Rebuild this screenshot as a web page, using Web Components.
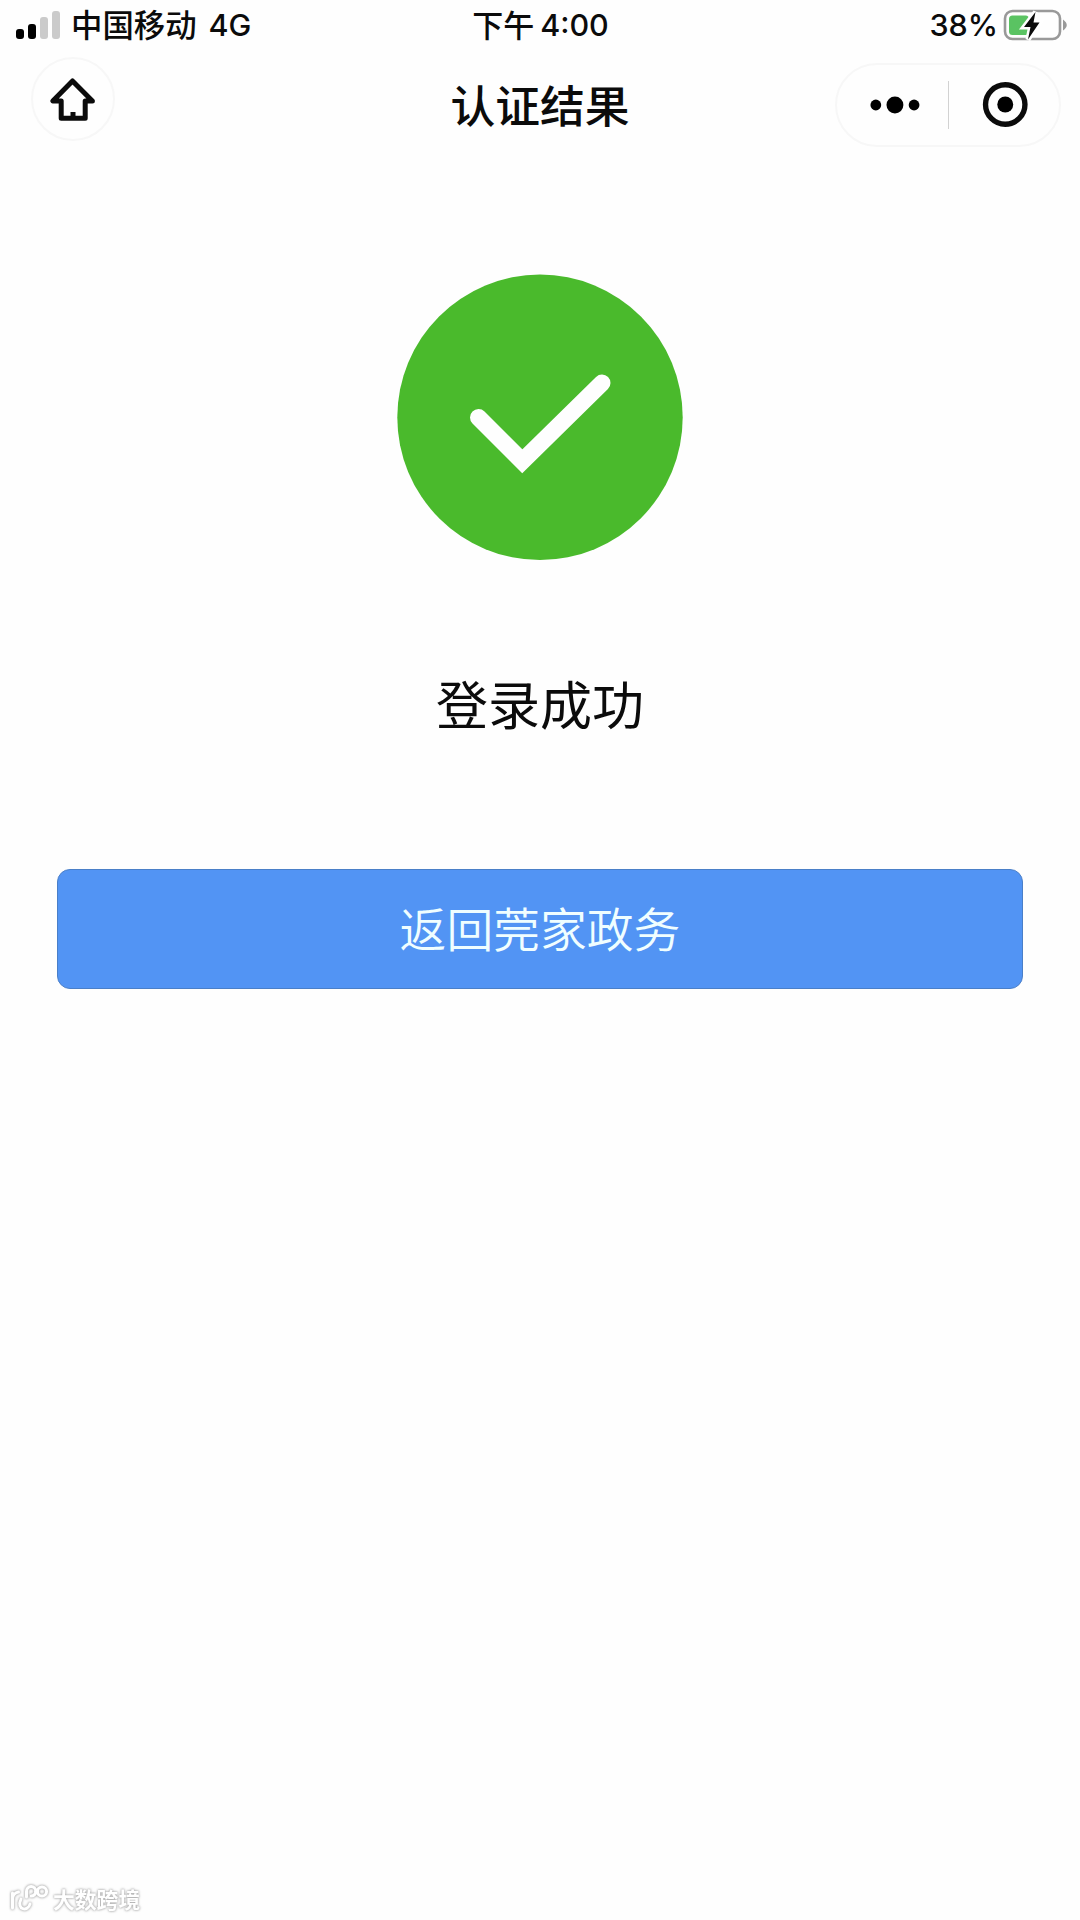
<!DOCTYPE html>
<html lang="zh-CN">
<head>
<meta charset="utf-8">
<title>认证结果</title>
<style>
  html, body {
    margin: 0;
    height: 100%;
    background: #fefefe;
  }

  body {
    font-family: Inter, "Noto Sans CJK SC", sans-serif;
    color: #0b0b0b;
    overflow: hidden;
  }
</style>
</head>
<body>
<app-screen>
  <status-bar slot="header" carrier="中国移动" network="4G" time="4:00" period="下午" battery="38%"></status-bar>
  <nav-bar slot="header">认证结果</nav-bar>
  <result-panel>
    登录成功
    <action-button slot="action">返回莞家政务</action-button>
  </result-panel>
  <brand-mark slot="footer">大数跨境</brand-mark>
</app-screen>

<script>
// Page frame: header, content, footer
class AppScreen extends HTMLElement {
  constructor() {
    super();
    this.attachShadow({ mode: 'open' });
    this.shadowRoot.innerHTML = `
      <style>
        :host {
          display: flex;
          flex-direction: column;
          width: 1080px;
          height: 1920px;
          overflow: hidden;
        }

        main {
          flex: 1;
        }
      </style>
      <slot name="header"></slot>
      <main><slot></slot></main>
      <slot name="footer"></slot>
    `;
  }
}

customElements.define('app-screen', AppScreen);

// Phone status bar
class StatusBar extends HTMLElement {
  constructor() {
    super();
    this.attachShadow({ mode: 'open' });
  }

  connectedCallback() {
    const get = (name) => this.getAttribute(name) || '';

    this.shadowRoot.innerHTML = `
      <style>
        :host {
          display: grid;
          grid-template-columns: 1fr auto 1fr;
          align-items: center;
          height: 50px;
          padding: 0 13px 0 16px;
          font-size: 30.5px;
          font-weight: 450;
          line-height: 50px;
          white-space: nowrap;
        }

        svg {
          display: block;
          flex: none;
        }

        .left,
        .center,
        .right {
          display: flex;
          align-items: center;
        }

        .cjk {
          font-family: "Noto Sans CJK SC", sans-serif;
          font-size: 31.4px;
          font-weight: 500;
          line-height: 48px;
          padding-bottom: 2px;
        }

        .left .cjk {
          margin: 0 12px 0 10px;
        }

        .center .cjk {
          font-size: 31px;
          margin-right: 6px;
        }

        .center {
          margin-right: 2px;
        }

        .right {
          justify-content: flex-end;
          gap: 5px;
        }
      </style>
      <div class="left">
        <svg width="45" height="50" viewBox="0 0 45 50">
          <rect x="0" y="29" width="8" height="10" rx="3"/>
          <rect x="12" y="24" width="8" height="15" rx="3"/>
          <rect x="24" y="17" width="8" height="22" rx="3" fill="#cbcbcb"/>
          <rect x="36" y="11" width="8" height="28" rx="3" fill="#cbcbcb"/>
        </svg>
        <span class="cjk">${get('carrier')}</span>
        <span>${get('network')}</span>
      </div>
      <div class="center">
        <span class="cjk">${get('period')}</span>
        <span>${get('time')}</span>
      </div>
      <div class="right">
        <span>${get('battery')}</span>
        <svg width="64" height="50" viewBox="0 0 64 50">
          <rect x="2" y="11" width="55" height="28" rx="7.5" fill="none" stroke="#999" stroke-width="2.6"/>
          <path d="M60 19.5 Q67.5 25 60 30.5 Z" fill="#999"/>
          <rect x="6" y="15.5" width="20" height="19.5" rx="3.5" fill="#5ac362"/>
          <path d="M32.5 12 L21 27 H27.5 L25 39.5 L36.5 22.5 H30.5 Z" fill="#0b0b0b" stroke="#fff" stroke-width="5" paint-order="stroke"/>
        </svg>
      </div>
    `;
  }
}

customElements.define('status-bar', StatusBar);

// Title bar with home button and menu capsule
class NavBar extends HTMLElement {
  constructor() {
    super();
    this.attachShadow({ mode: 'open' });
    this.shadowRoot.innerHTML = `
      <style>
        :host {
          display: grid;
          grid-template-columns: 1fr auto 1fr;
          align-items: center;
          height: 110px;
          padding: 0 19px 0 31px;
          box-sizing: border-box;
        }

        svg {
          display: block;
        }

        .home,
        .capsule {
          box-sizing: border-box;
          border: 2px solid #f7f7f7;
          display: flex;
          align-items: center;
        }

        .home {
          width: 84px;
          height: 84px;
          margin-bottom: 12px;
          border-radius: 50%;
          justify-content: center;
        }

        h1 {
          margin: 0 0 3px -12px;
          font-family: "Noto Sans CJK SC", sans-serif;
          font-size: 44.8px;
          font-weight: 500;
          line-height: 66px;
        }

        .capsule {
          justify-self: end;
          width: 226px;
          height: 84px;
          margin-bottom: 1px;
          border-radius: 42px;
        }

        .capsule svg {
          flex: 1;
        }

        .divider {
          width: 1px;
          height: 48px;
          background: #d2d2d2;
        }
      </style>
      <div class="home">
        <svg width="48" height="48" viewBox="0 0 48 48" fill="none" stroke="#0b0b0b" stroke-width="5" stroke-linejoin="round">
          <path d="M23.5 6 L3.8 26 H12.2 V43.2 H36.2 V26 H43.4 Z"/>
          <path d="M24 43 V37"/>
        </svg>
      </div>
      <h1><slot></slot></h1>
      <div class="capsule">
        <svg width="111" height="48" viewBox="0 0 111 48">
          <circle cx="39" cy="24" r="5.4"/>
          <circle cx="58.2" cy="24" r="8.5"/>
          <circle cx="77.4" cy="24" r="5.4"/>
        </svg>
        <div class="divider"></div>
        <svg width="111" height="48" viewBox="0 0 111 48">
          <circle cx="56.5" cy="23.5" r="19.8" fill="none" stroke="#0b0b0b" stroke-width="5.4"/>
          <circle cx="56.5" cy="23.5" r="8"/>
        </svg>
      </div>
    `;
  }
}

customElements.define('nav-bar', NavBar);

// Success icon, message and action
class ResultPanel extends HTMLElement {
  constructor() {
    super();
    this.attachShadow({ mode: 'open' });
    this.shadowRoot.innerHTML = `
      <style>
        :host {
          display: flex;
          flex-direction: column;
          align-items: center;
          padding: 114px 57px 0;
        }

        svg {
          display: block;
        }

        .message {
          margin: 103px 0 126px;
          font-family: "Noto Sans CJK SC", sans-serif;
          font-size: 52px;
          font-weight: 400;
          line-height: 80px;
        }

        slot[name="action"] {
          display: block;
          width: 100%;
        }
      </style>
      <svg width="286" height="286" viewBox="0 0 286 286">
        <circle cx="143" cy="143.3" r="142.7" fill="#4aba2c"/>
        <path d="M81.5 143.5 L125.3 187.2 L205 109" fill="none" stroke="#fefefe" stroke-width="17" stroke-linecap="round"/>
      </svg>
      <div class="message"><slot></slot></div>
      <slot name="action"></slot>
    `;
  }
}

customElements.define('result-panel', ResultPanel);

// Full-width button
class ActionButton extends HTMLElement {
  constructor() {
    super();
    this.attachShadow({ mode: 'open' });
    this.shadowRoot.innerHTML = `
      <style>
        :host {
          display: block;
        }

        button {
          display: block;
          width: 100%;
          height: 120px;
          padding: 0 0 4px;
          border: 1.5px solid #4a7fc8;
          border-radius: 13px;
          background: #5294f4;
          color: #f0feff;
          font-family: "Noto Sans CJK SC", sans-serif;
          font-size: 46.8px;
          font-weight: 350;
          line-height: 112px;
        }
      </style>
      <button type="button"><slot></slot></button>
    `;
  }
}

customElements.define('action-button', ActionButton);

// Small white mark with a soft grey outline
class BrandMark extends HTMLElement {
  constructor() {
    super();
    this.attachShadow({ mode: 'open' });
    this.shadowRoot.innerHTML = `
      <style>
        :host {
          display: flex;
          align-items: center;
          gap: 4px;
          height: 34px;
          padding: 0 0 4px 9px;
          color: #fff;
          font-family: "Noto Sans CJK SC", sans-serif;
          font-size: 21.8px;
          font-weight: 700;
          line-height: 34px;
          filter: drop-shadow(0 0 1px #aaa) drop-shadow(0 0 1px #ccc);
        }

        svg {
          display: block;
        }
      </style>
      <svg width="40" height="30" viewBox="0 0 40 30" fill="none" stroke="#fff" stroke-width="3" stroke-linecap="round">
        <path d="M3.5 9 V24 M3.5 14 Q4.5 9 9.5 8"/>
        <path d="M12 15 C7 26 19 28 21 20"/>
        <path d="M17.5 13 V7.5 A4.7 4.7 0 1 1 22.2 12"/>
        <circle cx="33" cy="7.5" r="4.6"/>
        <path d="M26.5 7.5 H28.5"/>
      </svg>
      <slot></slot>
    `;
  }
}

customElements.define('brand-mark', BrandMark);
</script>
</body>
</html>
